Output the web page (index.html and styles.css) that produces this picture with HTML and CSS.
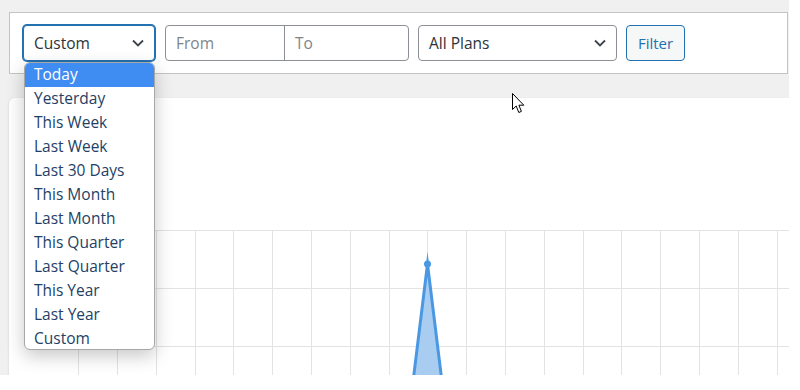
FILE: index.html
```html
<!DOCTYPE html>
<html>
<head>
<meta charset="utf-8">
<link rel="stylesheet" href="styles.css">
</head>
<body>
<div class="page">
  <div class="toolbar">
    <div class="select focused">
      <span class="val">Custom</span>
      <svg class="chev" width="12" height="8" viewBox="0 0 12 8"><path d="M1 1.5 L6 6.5 L11 1.5" fill="none" stroke="#3c434a" stroke-width="1.8"/></svg>
    </div>
    <div class="range">
      <span class="field from">From</span>
      <span class="field to">To</span>
    </div>
    <div class="select plans">
      <span class="val">All Plans</span>
      <svg class="chev" width="12" height="8" viewBox="0 0 12 8"><path d="M1 1.5 L6 6.5 L11 1.5" fill="none" stroke="#3c434a" stroke-width="1.8"/></svg>
    </div>
    <button class="btn">Filter</button>
  </div>
  <div class="card">
    <svg class="chart" width="780" height="160" viewBox="0 0 780 160">
      <g stroke="#e3e3e3" stroke-width="1">
        <line x1="69" y1="0.5" x2="780" y2="0.5"/>
        <line x1="69" y1="58.5" x2="780" y2="58.5"/>
        <line x1="69" y1="116.5" x2="780" y2="116.5"/>
        <line x1="69.5" y1="0" x2="69.5" y2="160"/>
        <line x1="108.5" y1="0" x2="108.5" y2="160"/>
        <line x1="147.5" y1="0" x2="147.5" y2="160"/>
        <line x1="186.5" y1="0" x2="186.5" y2="160"/>
        <line x1="224.5" y1="0" x2="224.5" y2="160"/>
        <line x1="263.5" y1="0" x2="263.5" y2="160"/>
        <line x1="302.5" y1="0" x2="302.5" y2="160"/>
        <line x1="341.5" y1="0" x2="341.5" y2="160"/>
        <line x1="380.5" y1="0" x2="380.5" y2="160"/>
        <line x1="418.5" y1="0" x2="418.5" y2="160"/>
        <line x1="457.5" y1="0" x2="457.5" y2="160"/>
        <line x1="496.5" y1="0" x2="496.5" y2="160"/>
        <line x1="535.5" y1="0" x2="535.5" y2="160"/>
        <line x1="574.5" y1="0" x2="574.5" y2="160"/>
        <line x1="612.5" y1="0" x2="612.5" y2="160"/>
        <line x1="651.5" y1="0" x2="651.5" y2="160"/>
        <line x1="690.5" y1="0" x2="690.5" y2="160"/>
        <line x1="729.5" y1="0" x2="729.5" y2="160"/>
        <line x1="768.5" y1="0" x2="768.5" y2="160"/>
      </g>
      <polygon points="403,160 418.5,34 434,160" fill="#a8cdf1"/>
      <polyline points="403,160 418.5,34 434,160" fill="none" stroke="#4a98e4" stroke-width="3" stroke-linejoin="miter" stroke-miterlimit="12"/>
      <circle cx="418.5" cy="34" r="3.5" fill="#4a98e4"/>
    </svg>
  </div>
  <ul class="menu">
    <li class="on">Today</li>
    <li>Yesterday</li>
    <li>This Week</li>
    <li>Last Week</li>
    <li>Last 30 Days</li>
    <li>This Month</li>
    <li>Last Month</li>
    <li>This Quarter</li>
    <li>Last Quarter</li>
    <li>This Year</li>
    <li>Last Year</li>
    <li>Custom</li>
  </ul>
  <svg class="cursor" width="14" height="22" viewBox="0 0 14 22">
    <path d="M0.5 0.5 L0.5 16.5 L4.2 13 L6.8 19.5 L9.4 18.4 L6.9 12.2 L11.8 12.2 Z" fill="#fff" stroke="#000" stroke-width="1" stroke-linejoin="round"/>
  </svg>
</div>
</body>
</html>
```

FILE: styles.css
```css
html, body {
  margin: 0;
  padding: 0;
  background: #fff;
}
.page {
  position: relative;
  width: 789px;
  height: 375px;
  overflow: hidden;
  background: #f0f0f1;
  padding: 12px 0 0 9px;
  box-sizing: border-box;
  font-family: "Open Sans", "Noto Sans", sans-serif;
  color: #2c3338;
}
.toolbar {
  display: flex;
  align-items: center;
  height: 62px;
  margin-right: 1px;
  box-sizing: border-box;
  background: #fff;
  border: 1px solid #c3c4c7;
  padding-left: 13px;
}
.select {
  display: flex;
  align-items: center;
  justify-content: space-between;
  height: 36px;
  box-sizing: border-box;
  border: 1px solid #8c8f94;
  border-radius: 4px;
  background: #fff;
  padding: 0 10px 0 10px;
  font-size: 15.5px;
  color: #2c3338;
}
.select.focused {
  width: 132px;
  border-color: #2271b1;
  box-shadow: 0 0 0 1px #2271b1;
  margin-right: 10px;
}
.select.plans {
  width: 199px;
  margin-right: 9px;
}
.range {
  display: flex;
  width: 244px;
  height: 36px;
  box-sizing: border-box;
  border: 1px solid #8c8f94;
  border-radius: 4px;
  background: #fff;
  margin-right: 9px;
}
.field {
  display: flex;
  align-items: center;
  padding-left: 10px;
  font-size: 15.5px;
  color: #80848a;
}
.field.from {
  width: 119px;
  box-sizing: border-box;
  border-right: 1px solid #8c8f94;
}
.field.to {
  flex: 1;
}
.btn {
  height: 36px;
  width: 59px;
  box-sizing: border-box;
  border: 1px solid #2271b1;
  border-radius: 4px;
  background: #f6f7f7;
  color: #2271b1;
  font-family: "Open Sans", "Noto Sans", sans-serif;
  font-size: 15px;
  padding: 0;
}
.card {
  margin-top: 24px;
  height: 320px;
  padding-top: 132px;
  box-sizing: border-box;
  background: #fff;
  border-radius: 6px 0 0 0;
  box-shadow: -1px 0 2px rgba(0,0,0,0.06);
}
.chart {
  display: block;
}
.menu {
  position: absolute;
  left: 24px;
  top: 62px;
  width: 131px;
  height: 288px;
  box-sizing: border-box;
  margin: 0;
  padding: 0;
  list-style: none;
  background: #fff;
  border: 1px solid #a7a7a7;
  border-radius: 6px;
  box-shadow: 0 6px 18px rgba(0,0,0,0.22);
  overflow: hidden;
}
.menu li {
  height: 24px;
  line-height: 23px;
  padding-left: 9px;
  font-size: 15.5px;
  color: #243f66;
}
.menu li.on {
  background: #3f8cf2;
  color: #fff;
}
.cursor {
  position: absolute;
  left: 512px;
  top: 93px;
}
```
